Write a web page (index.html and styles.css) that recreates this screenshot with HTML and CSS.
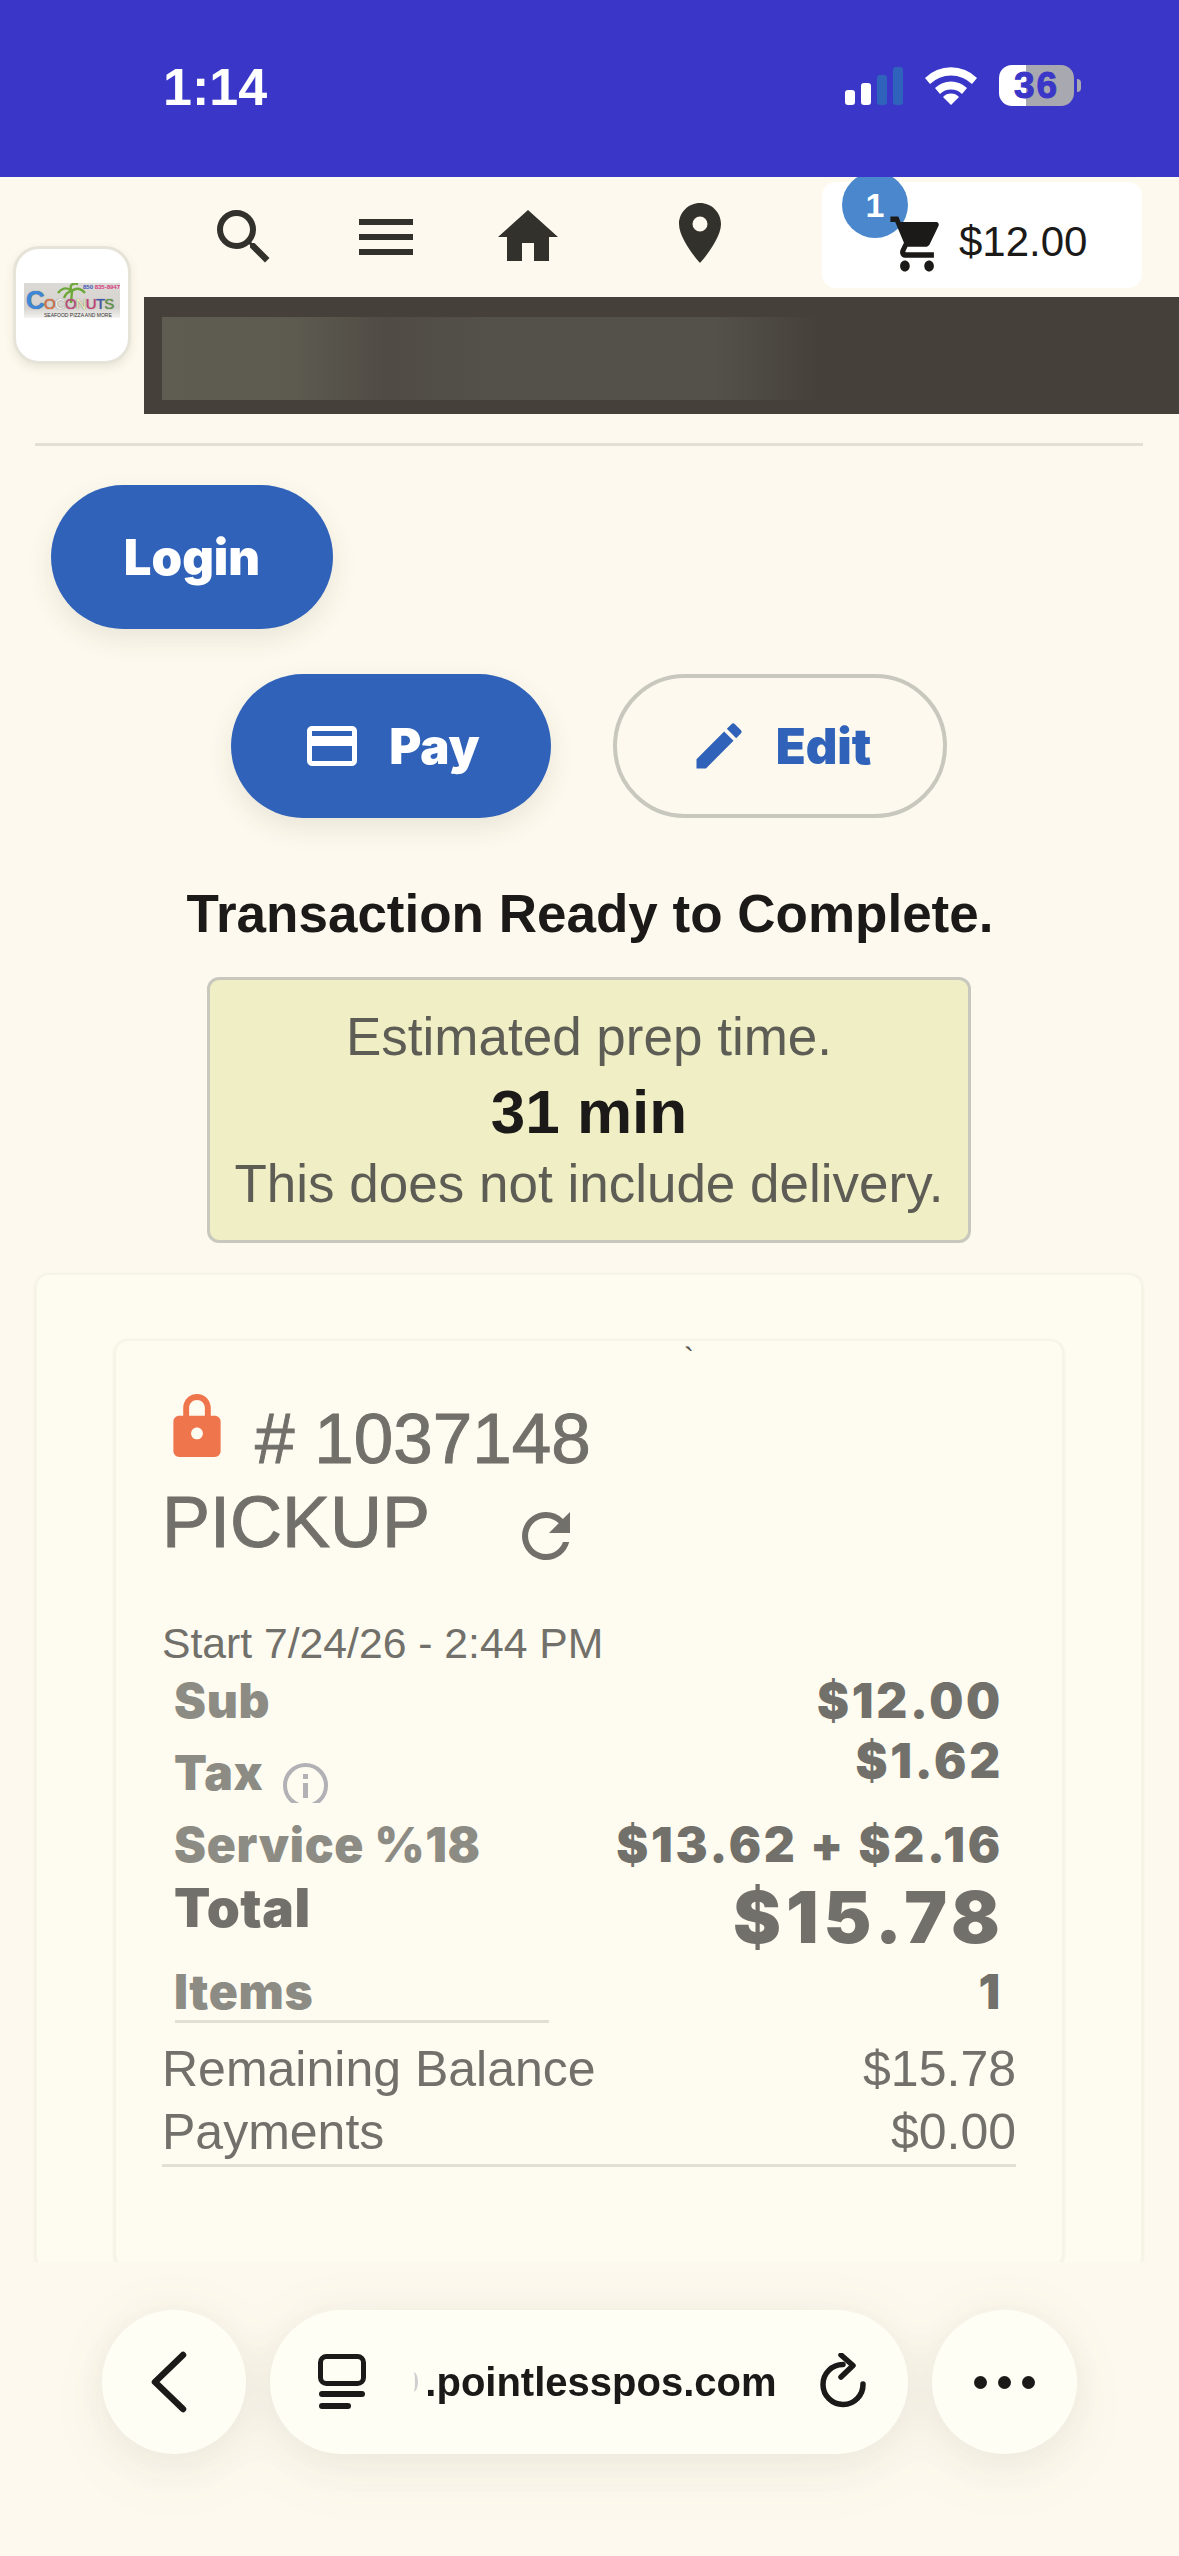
FILE: index.html
```html
<!DOCTYPE html>
<html lang="en">
<head>
    <meta charset="UTF-8">
    <meta name="viewport" content="width=device-width, initial-scale=1.0">
    <title>Checkout</title>
    <link rel="stylesheet" href="styles.css">
</head>
<body>
    <div class="page">
        <div class="status-bar">
            <span class="clock">1:14</span>
            <div class="status-icons">
                <svg class="signal" viewBox="0 0 58 38" width="58" height="38">
                    <rect x="0" y="23" width="10" height="15" rx="3" fill="#fff"/>
                    <rect x="16" y="16" width="10" height="22" rx="3" fill="#fff"/>
                    <rect x="32" y="8" width="10" height="30" rx="3" fill="#2f62bb"/>
                    <rect x="48" y="0" width="10" height="38" rx="3" fill="#2f62bb"/>
                </svg>
                <svg class="wifi" viewBox="0 0 52 38" width="52" height="38">
                    <path d="M0 11 A37 37 0 0 1 52 11 L47 17 A30 30 0 0 0 5 17 Z" fill="#fff"/>
                    <path d="M10 21 A23 23 0 0 1 42 21 L37 27 A16 16 0 0 0 15 27 Z" fill="#fff"/>
                    <path d="M18 30 A11 11 0 0 1 34 30 L26 38 Z" fill="#fff"/>
                </svg>
                <div class="battery"><span class="battery-level">36</span></div>
                <span class="battery-nub"></span>
            </div>
        </div>

        <div class="content">
            <header class="top-header">
                <div class="logo-card">
                    <div class="logo">
                        <span class="logo-phone">850 <i>835-8947</i></span>
                        <svg class="logo-palm" viewBox="0 0 30 20" width="30" height="20">
                            <path d="M15 20 L16 8 M16 8 C10 3 5 6 2 10 M16 8 C12 1 18 0 22 1 M16 8 C21 4 26 6 29 10 M16 8 C12 8 9 12 8 15" stroke="#6fa83a" stroke-width="2.4" fill="none"/>
                        </svg>
                        <span class="logo-name"><b class="c1">C</b><b class="c2">O</b><b class="c3">C</b><b class="c4">O</b><b class="c5">N</b><b class="c6">U</b><b class="c7">T</b><b class="c8">S</b></span>
                        <span class="logo-sub">SEAFOOD PIZZA AND MORE</span>
                    </div>
                </div>
                <div class="header-main">
                    <nav class="nav-row">
                        <svg class="nav-icon" viewBox="0 0 24 24"><path d="M15.500 14h-.79l-.28-.27A6.470 6.470 0 0 0 16 9.500 6.500 6.500 0 1 0 9.500 16c1.610 0 3.090-.59 4.230-1.570l.27.28v.79l5 4.990L20.490 19l-4.990-5zm-6 0C7.010 14 5 11.990 5 9.500S7.010 5 9.500 5 14 7.010 14 9.500 11.990 14 9.500 14z"/></svg>
                        <svg class="nav-icon" viewBox="0 0 24 24"><path d="M3 18h18v-2H3v2zm0-5h18v-2H3v2zm0-7v2h18V6H3z"/></svg>
                        <svg class="nav-icon" viewBox="0 0 24 24"><path d="M10 20v-6h4v6h5v-8h3L12 3 2 12h3v8z"/></svg>
                        <svg class="nav-icon nav-pin" viewBox="0 0 24 24"><path d="M12 2C8.130 2 5 5.130 5 9c0 5.250 7 13 7 13s7-7.750 7-13c0-3.870-3.130-7-7-7zm0 9.500a2.500 2.500 0 0 1 0-5 2.500 2.500 0 0 1 0 5z"/></svg>
                        <div class="cart-box">
                            <span class="cart-badge">1</span>
                            <svg class="cart-icon" viewBox="0 0 24 24" preserveAspectRatio="none"><path d="M7 18c-1.100 0-1.990.9-1.990 2S5.900 22 7 22s2-.9 2-2-.9-2-2-2zM1 2v2h2l3.600 7.590-1.350 2.450c-.16.280-.25.610-.25.960 0 1.100.9 2 2 2h12v-2H7.420c-.14 0-.25-.11-.25-.25l.03-.12.9-1.630h7.450c.75 0 1.410-.41 1.750-1.030l3.580-6.490A1 1 0 0 0 20 4H5.210l-.94-2H1zm16 16c-1.100 0-1.990.9-1.990 2s.89 2 1.990 2 2-.9 2-2-.9-2-2-2z"/></svg>
                            <span class="cart-total">$12.00</span>
                        </div>
                    </nav>
                    <div class="banner"><div class="banner-blur"></div></div>
                </div>
            </header>

            <hr class="top-rule">

            <div class="login-row">
                <button class="btn btn-solid btn-login">Login</button>
            </div>

            <div class="action-row">
                <button class="btn btn-solid btn-pay">
                    <svg class="btn-icon" viewBox="0 0 24 24"><path d="M20 4H4c-1.110 0-1.990.89-1.990 2L2 18c0 1.110.89 2 2 2h16c1.110 0 2-.89 2-2V6c0-1.110-.89-2-2-2zm0 14H4v-6h16v6zm0-10H4V6h16v2z" fill="#fff"/></svg>
                    Pay
                </button>
                <button class="btn btn-outline btn-edit">
                    <svg class="btn-icon" viewBox="0 0 24 24"><path d="M3 17.250V21h3.750L17.810 9.940l-3.750-3.750L3 17.250zM20.710 7.040a1 1 0 0 0 0-1.410l-2.340-2.340a1 1 0 0 0-1.410 0l-1.830 1.830 3.750 3.750 1.830-1.830z" fill="#2f62b8"/></svg>
                    Edit
                </button>
            </div>

            <h2 class="ready-title">Transaction Ready to Complete.</h2>

            <div class="prep-box">
                <div class="prep-text">Estimated prep time.</div>
                <div class="prep-time">31 min</div>
                <div class="prep-text">This does not include delivery.</div>
            </div>

            <div class="outer-card">
                <div class="order-card">
                    <div class="tick">`</div>
                    <div class="order-head">
                        <svg class="lock-icon" viewBox="0 0 48 64"><path d="M42 22h-4v-8C38 6.300 31.700 0 24 0S10 6.300 10 14v8H6c-3.300 0-6 2.700-6 6v30c0 3.300 2.700 6 6 6h36c3.300 0 6-2.700 6-6V28c0-3.300-2.700-6-6-6zM16 14c0-4.400 3.600-8 8-8s8 3.600 8 8v8H16v-8zm8 32c-3.300 0-6-2.700-6-6s2.700-6 6-6 6 2.700 6 6-2.700 6-6 6z" fill="#ef754c"/></svg>
                        <span class="order-number"># 1037148</span>
                    </div>
                    <div class="order-type">
                        <span>PICKUP</span>
                        <svg class="refresh-icon" viewBox="0 0 24 24"><path d="M17.650 6.350A7.958 7.958 0 0 0 12 4c-4.420 0-7.990 3.580-7.990 8s3.570 8 7.990 8c3.730 0 6.840-2.550 7.730-6h-2.080A5.990 5.990 0 0 1 12 18c-3.310 0-6-2.690-6-6s2.690-6 6-6c1.660 0 3.140.69 4.220 1.780L13 11h7V4l-2.350 2.350z" fill="#71706a"/></svg>
                    </div>
                    <div class="order-start">Start 7/24/26 - 2:44 PM</div>

                    <div class="sum-row row-sub"><span class="sum-label">Sub</span><span class="sum-value">$12.00</span></div>
                    <div class="sum-row row-tax">
                        <span class="sum-label">Tax
                            <svg class="info-icon" viewBox="0 0 45 40"><circle cx="22.500" cy="22.500" r="20.500" fill="none" stroke="#b1b1b6" stroke-width="4"/><rect x="20" y="20" width="5" height="15" fill="#b1b1b6"/><rect x="20" y="11" width="5" height="5" fill="#b1b1b6"/></svg>
                        </span>
                        <span class="sum-value">$1.62</span>
                    </div>
                    <div class="sum-row row-service"><span class="sum-label">Service %18</span><span class="sum-value">$13.62 + $2.16</span></div>
                    <div class="sum-row row-total"><span class="total-label">Total</span><span class="total-value">$15.78</span></div>
                    <div class="sum-row row-items"><span class="sum-label">Items</span><span class="sum-value">1</span></div>
                    <div class="items-rule"></div>

                    <div class="balance-row balance-first"><span>Remaining Balance</span><span>$15.78</span></div>
                    <div class="balance-row balance-last"><span>Payments</span><span>$0.00</span></div>
                </div>
            </div>
        </div>

        <div class="browser-bar">
            <div class="bar-group">
                <div class="bar-circle">
                    <svg class="back-icon" width="40" height="62" viewBox="0 0 40 62"><path d="M33 4 L5 31 L33 58" fill="none" stroke="#1b1a18" stroke-width="6.500" stroke-linecap="round" stroke-linejoin="round"/></svg>
                </div>
                <div class="bar-url">
                    <svg width="48" height="56" viewBox="0 0 48 56">
                        <rect x="2.500" y="2.500" width="43" height="27" rx="6" fill="none" stroke="#1b1a18" stroke-width="5"/>
                        <rect x="1" y="37" width="46" height="6" rx="3" fill="#1b1a18"/>
                        <rect x="1" y="49" width="32" height="6" rx="3" fill="#1b1a18"/>
                    </svg>
                    <div class="url-text"><span>.pointlesspos.com</span></div>
                    <svg width="48" height="58" viewBox="0 0 48 58">
                        <path d="M44 31 A20 20 0 1 1 24 11.500" fill="none" stroke="#1b1a18" stroke-width="5.500" stroke-linecap="round"/>
                        <path d="M22 2 L34 12.500 L22 24" fill="none" stroke="#1b1a18" stroke-width="5.500" stroke-linecap="round" stroke-linejoin="round"/>
                    </svg>
                </div>
                <div class="bar-circle bar-dots"><i></i><i></i><i></i></div>
            </div>
        </div>
    </div>
</body>
</html>
```
FILE: styles.css
```css
html, body {
    margin: 0;
    padding: 0;
}
body {
    font-family: "Liberation Sans", Arial, sans-serif;
    background-color: #fdf9ee;
    color: #1b1a18;
}
.page {
    width: 1179px;
    height: 2556px;
    display: flex;
    flex-direction: column;
    overflow: hidden;
}

/* status bar */
.status-bar {
    position: relative;
    z-index: 2;
    height: 177px;
    flex: none;
    background-color: #3a36c8;
    display: flex;
    justify-content: space-between;
    padding: 58px 98px 0 163px;
    box-sizing: border-box;
    color: #fff;
}
.clock {
    font-size: 52px;
    font-weight: 700;
    line-height: 58px;
}
.status-icons {
    display: flex;
    align-items: flex-start;
    padding-top: 9px;
}
.wifi {
    margin-left: 22px;
}
.battery {
    width: 75px;
    height: 41px;
    margin: -2px 0 0 22px;
    border-radius: 13px;
    background: linear-gradient(90deg, #fff 0 27px, #a8a8b0 27px);
    text-align: center;
}
.battery-level {
    font-size: 37px;
    font-weight: 700;
    line-height: 41px;
    letter-spacing: 2px;
    color: #3a36c8;
    -webkit-text-stroke: 1px #3a36c8;
}
.battery-nub {
    width: 4px;
    height: 13px;
    margin: 12px 0 0 3px;
    border-radius: 0 4px 4px 0;
    background-color: #a8a8b0;
}

/* page content */
.content {
    height: 2085px;
    flex: none;
    overflow: hidden;
}
.top-header {
    display: grid;
    grid-template-columns: 144px 1fr;
}
.logo-card {
    width: 112px;
    height: 112px;
    margin: 69px 0 0 13px;
    background-color: #fff;
    border: 3px solid #e6e3d9;
    border-radius: 26px;
    box-shadow: 0 4px 10px rgba(80, 70, 40, 0.1);
    overflow: hidden;
}
.logo {
    position: relative;
    width: 96px;
    height: 35px;
    margin: 34px 0 0 8px;
    background: linear-gradient(180deg, #dcdad6 0, #d6d3cf 70%, #f4f3ef 100%);
    overflow: hidden;
}
.logo-phone {
    position: absolute;
    right: 0;
    top: 1px;
    font-size: 6px;
    font-weight: 700;
    color: #3b55b5;
    white-space: nowrap;
}
.logo-phone i {
    font-style: normal;
    color: #d6397f;
}
.logo-palm {
    position: absolute;
    left: 32px;
    top: 0;
}
.logo-name {
    position: absolute;
    left: 2px;
    top: 7px;
    font-size: 15px;
    line-height: 20px;
    white-space: nowrap;
    letter-spacing: -0.8px;
    text-shadow: 0 0 1px #555;
}
.logo-name b {
    font-weight: 400;
}
.logo-name .c1 { color: #3d86d8; font-size: 26px; font-weight: 700; line-height: 20px; }
.logo-name .c2 { color: #e2703f; }
.logo-name .c3 { color: #f4f4f0; }
.logo-name .c4 { color: #c84d80; }
.logo-name .c5 { color: #f0eebc; }
.logo-name .c6 { color: #d6397f; }
.logo-name .c7 { color: #3b55b5; }
.logo-name .c8 { color: #5f9a48; }
.logo-sub {
    position: absolute;
    left: 20px;
    bottom: 0;
    font-size: 5px;
    color: #333;
    white-space: nowrap;
}
.header-main {
    min-width: 0;
}
.nav-row {
    display: flex;
    align-items: flex-start;
    gap: 70px;
    padding: 5px 0 0 64px;
}
.nav-icon {
    width: 72px;
    height: 72px;
    margin-top: 19px;
    fill: #33312c;
    flex: none;
}
.nav-pin {
    margin: 15px 0 0 30px;
}
.cart-box {
    position: relative;
    width: 320px;
    height: 106px;
    margin-left: 16px;
    background-color: #fff;
    border-radius: 14px;
    flex: none;
}
.cart-badge {
    position: absolute;
    left: 20px;
    top: -10px;
    width: 66px;
    height: 66px;
    border-radius: 50%;
    background-color: #4a87cc;
    color: #fff;
    font-size: 34px;
    font-weight: 700;
    line-height: 66px;
    text-align: center;
}
.cart-icon {
    position: absolute;
    left: 66px;
    top: 29px;
    width: 58px;
    height: 66px;
    fill: #1b1a18;
}
.cart-total {
    position: absolute;
    left: 137px;
    top: 36px;
    font-size: 42px;
    line-height: 48px;
}
.banner {
    height: 117px;
    margin-top: 9px;
    background-color: #45413a;
    padding: 20px 0 14px 18px;
    box-sizing: border-box;
}
.banner-blur {
    width: 658px;
    height: 83px;
    background: linear-gradient(90deg, #5f5c52 0%, #5d5a50 20%, #504c45 34%, #54504a 50%, #54504a 84%, #45413a 100%);
}
.top-rule {
    height: 3px;
    margin: 29px 36px 0 35px;
    border: none;
    background-color: #e2e0d4;
}

/* buttons */
.btn {
    height: 144px;
    border-radius: 72px;
    display: inline-flex;
    align-items: center;
    justify-content: center;
    font-family: Inter, "Noto Sans", sans-serif;
    font-size: 49px;
    font-weight: 900;
    box-sizing: border-box;
    padding: 0;
}
.btn-solid {
    background-color: #2f62b8;
    color: #fff;
    border: none;
    box-shadow: 0 10px 26px rgba(70, 60, 30, 0.1);
}
.btn-outline {
    background: transparent;
    color: #2f62b8;
    border: 4px solid #c9c8be;
}
.btn-icon {
    width: 60px;
    height: 60px;
    margin-right: 27px;
}
.login-row {
    padding: 39px 0 0 51px;
}
.btn-login {
    width: 282px;
}
.action-row {
    display: flex;
    gap: 62px;
    padding: 45px 0 0 231px;
}
.btn-pay {
    width: 320px;
}
.btn-edit {
    width: 334px;
}
.ready-title {
    margin: 62px 0 0;
    padding-left: 1px;
    font-size: 53px;
    font-weight: 700;
    line-height: 68px;
    text-align: center;
    color: #1b1a18;
}

/* prep time */
.prep-box {
    width: 764px;
    height: 266px;
    margin: 29px 0 0 207px;
    background-color: #efeec4;
    border: 3px solid #c9c8be;
    border-radius: 12px;
    box-sizing: border-box;
    text-align: center;
    padding-top: 23px;
}
.prep-text {
    font-size: 53px;
    line-height: 68px;
    color: #5d5c55;
}
.prep-time {
    margin: 1px 0 -2px;
    font-size: 62px;
    font-weight: 700;
    line-height: 80px;
    color: #1b1a18;
}

/* order cards */
.outer-card {
    width: 1108px;
    margin: 30px 0 0 35px;
    padding: 64px 77px 0 77px;
    border: 2px solid #f6f3e7;
    border-radius: 14px;
    box-sizing: border-box;
    background-color: #fefbf0;
    box-shadow: 0 1px 3px rgba(80, 70, 40, 0.09);
}
.order-card {
    height: 925px;
    border: 2px solid #f6f3e7;
    border-radius: 14px;
    padding: 0 46px;
    box-shadow: 0 1px 3px rgba(80, 70, 40, 0.1);
    color: #71706a;
}
.tick {
    height: 40px;
    padding-left: 522px;
    font-size: 30px;
    line-height: 34px;
    color: #55544e;
}
.order-head {
    display: flex;
    align-items: flex-start;
    padding-left: 11px;
    margin-top: 17px;
}
.lock-icon {
    width: 48px;
    height: 63px;
    margin-top: -4px;
}
.order-number {
    margin-left: 34px;
    font-size: 71px;
    line-height: 82px;
    -webkit-text-stroke: 1px #71706a;
}
.order-type {
    display: flex;
    align-items: flex-start;
    margin-top: 1px;
    font-size: 72px;
    line-height: 82px;
    -webkit-text-stroke: 1px #71706a;
}
.refresh-icon {
    width: 72px;
    height: 72px;
    margin: 19px 0 0 80px;
}
.order-start {
    margin-top: 47px;
    font-size: 42.7px;
    line-height: 48px;
}
.sum-row {
    display: flex;
    justify-content: space-between;
    align-items: flex-start;
    padding: 0 16px 0 12px;
    font-family: Inter, "Liberation Sans", sans-serif;
    font-weight: 900;
}
.sum-label {
    display: flex;
    font-size: 48px;
    line-height: 54px;
    letter-spacing: 0.7px;
    color: #8c8b84;
}
.sum-value {
    margin-right: -3px;
    font-size: 48px;
    line-height: 54px;
    letter-spacing: 2.8px;
    color: #71706a;
}
.row-sub {
    height: 72px;
    margin-top: 7px;
}
.row-tax {
    height: 72px;
}
.row-tax .sum-value {
    margin-top: -12px;
}
.row-service {
    height: 54px;
}
.row-total {
    height: 93px;
}
.row-items {
    height: 55px;
}
.info-icon {
    width: 45px;
    height: 40px;
    margin: 17px 0 0 20px;
}
.total-label {
    margin-top: 9px;
    font-size: 53px;
    line-height: 54px;
    letter-spacing: 0.5px;
    color: #71706a;
}
.total-value {
    margin: 4px -5px 0 0;
    font-size: 72px;
    line-height: 82px;
    letter-spacing: 5px;
    color: #71706a;
}
.items-rule {
    width: 374px;
    height: 3px;
    margin-left: 13px;
    background-color: #e2e0d4;
}
.balance-row {
    display: flex;
    justify-content: space-between;
    font-size: 50px;
    line-height: 63px;
}
.balance-first {
    margin-top: 15px;
}
.balance-last {
    height: 63px;
    border-bottom: 3px solid #e2e0d4;
}

/* browser toolbar */
.browser-bar {
    flex: 1;
    padding: 48px 0 0 102px;
    box-sizing: border-box;
    background-color: #fdf9ee;
}
.bar-group {
    display: flex;
    gap: 24px;
    filter: drop-shadow(0 0 22px rgba(90, 80, 50, 0.07)) drop-shadow(0 22px 26px rgba(90, 80, 50, 0.05));
}
.bar-circle, .bar-url {
    height: 144px;
    background-color: #fffef5;
    border-radius: 72px;
    display: flex;
    align-items: center;
}
.bar-circle {
    width: 144px;
    justify-content: center;
}
.back-icon {
    margin-right: 8px;
}
.bar-url {
    width: 638px;
    padding: 0 41px 0 48px;
    box-sizing: border-box;
    justify-content: space-between;
}
.url-text {
    width: 368px;
    display: flex;
    align-items: center;
    justify-content: space-between;
    font-size: 40px;
    font-weight: 700;
    white-space: nowrap;
}
/* the last bit of the scrolled-away hostname */
.url-text::before {
    content: "";
    width: 6px;
    height: 20px;
    border-right: 3px solid #cfcfcf;
    border-radius: 0 50% 50% 0;
}
.bar-dots {
    gap: 11px;
    width: 145px;
}
.bar-dots i {
    width: 13px;
    height: 13px;
    border-radius: 50%;
    background-color: #1b1a18;
}
```
